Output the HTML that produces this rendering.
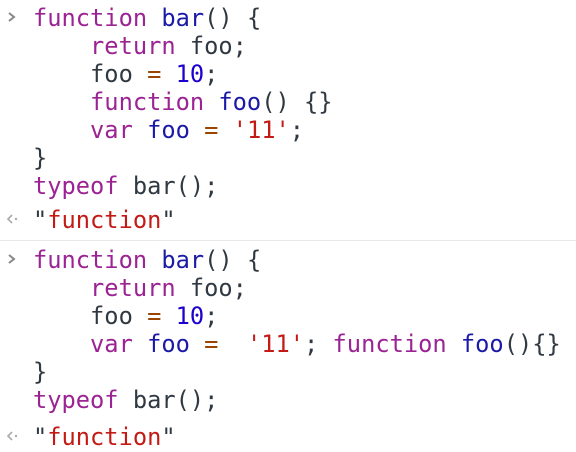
<!DOCTYPE html>
<html><head><style>
body{margin:0;width:576px;height:452px;background:#fff;overflow:hidden;font-family:"DejaVu Sans Mono","Liberation Mono",monospace;font-size:23.7px;color:#303942}
.l{position:absolute;left:33px;white-space:pre;line-height:28px;height:28px}
.k{color:#9b2393}.f{color:#1a1aa6}.n{color:#1c00cf}.s{color:#c41a16}.o{color:#994500}
svg{position:absolute;left:4px}
.hr{position:absolute;left:0;top:240px;width:576px;height:1px;background:#e8e8e8}
</style></head><body>
<svg style="top:10px" width="14" height="14"><path d="M5 3 L10 7 L5 11" stroke="#888" stroke-width="2" fill="none"/></svg>
<div class="l" style="top:4px"><span class="k">function</span> <span class="f">bar</span>() {</div>
<div class="l" style="top:32px">    <span class="k">return</span> foo;</div>
<div class="l" style="top:60px">    foo <span class="o">=</span> <span class="n">10</span>;</div>
<div class="l" style="top:88px">    <span class="k">function</span> <span class="f">foo</span>() {}</div>
<div class="l" style="top:116px">    <span class="k">var</span> <span class="f">foo</span> <span class="o">=</span> <span class="s">'11'</span>;</div>
<div class="l" style="top:144px">}</div>
<div class="l" style="top:172px"><span class="k">typeof</span> bar();</div>
<svg style="top:212px" width="16" height="14"><path d="M8 3 L4 7 L8 11" stroke="#aaa" stroke-width="1.6" fill="none"/><circle cx="12" cy="7" r="1.2" fill="#aaa"/></svg>
<div class="l" style="top:206px">"<span class="s">function</span>"</div>
<div class="hr"></div>
<svg style="top:252px" width="14" height="14"><path d="M5 3 L10 7 L5 11" stroke="#888" stroke-width="2" fill="none"/></svg>
<div class="l" style="top:246px"><span class="k">function</span> <span class="f">bar</span>() {</div>
<div class="l" style="top:274px">    <span class="k">return</span> foo;</div>
<div class="l" style="top:302px">    foo <span class="o">=</span> <span class="n">10</span>;</div>
<div class="l" style="top:330px">    <span class="k">var</span> <span class="f">foo</span> <span class="o">=</span>  <span class="s">'11'</span>; <span class="k">function</span> <span class="f">foo</span>(){}</div>
<div class="l" style="top:358px">}</div>
<div class="l" style="top:386px"><span class="k">typeof</span> bar();</div>
<svg style="top:429px" width="16" height="14"><path d="M8 3 L4 7 L8 11" stroke="#aaa" stroke-width="1.6" fill="none"/><circle cx="12" cy="7" r="1.2" fill="#aaa"/></svg>
<div class="l" style="top:423px">"<span class="s">function</span>"</div>
</body></html>
